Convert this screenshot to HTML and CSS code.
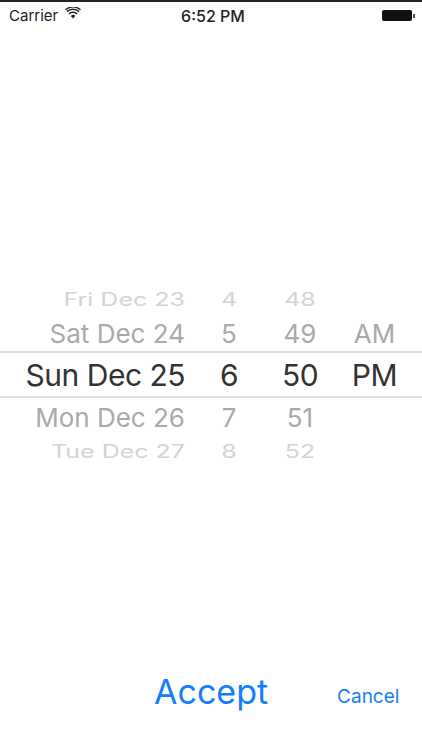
FILE: index.html
```html
<!DOCTYPE html>
<html>
<head>
    <title>Date picker</title>
    <link rel="stylesheet" href="styles.css">
</head>
<body>
    <div class="status-bar">
        <div class="status-left">
            <span>Carrier</span>
            <svg class="wifi" viewBox="0 0 16 12" width="16" height="12">
                <path d="M8 11.4 5.7 8.9a3.3 3.3 0 0 1 4.6 0z" fill="#222"/>
                <path d="M3.9 6.9a6 6 0 0 1 8.2 0" fill="none" stroke="#222" stroke-width="1.6"/>
                <path d="M1.9 4.7a9 9 0 0 1 12.2 0" fill="none" stroke="#222" stroke-width="1.6"/>
                <path d="M0.5 2.7a11.2 11.2 0 0 1 15 0" fill="none" stroke="#222" stroke-width="1.2"/>
            </svg>
        </div>
        <div class="status-time">6:52 PM</div>
        <div class="status-right">
            <div class="battery"></div>
            <div class="battery-tip"></div>
        </div>
    </div>

    <div class="picker">
        <div class="row far">
            <div class="date">Fri Dec 23</div><div>4</div><div>48</div><div></div>
        </div>
        <div class="row near">
            <div class="date">Sat Dec 24</div><div>5</div><div>49</div><div>AM</div>
        </div>
        <div class="row selected">
            <div class="date">Sun Dec 25</div><div>6</div><div>50</div><div>PM</div>
        </div>
        <div class="row near">
            <div class="date">Mon Dec 26</div><div>7</div><div>51</div><div></div>
        </div>
        <div class="row far">
            <div class="date">Tue Dec 27</div><div>8</div><div>52</div><div></div>
        </div>
    </div>

    <div class="actions">
        <a href="#" class="accept">Accept</a>
        <a href="#" class="cancel">Cancel</a>
    </div>
</body>
</html>
```

FILE: styles.css
```css
body {
    margin: 0;
    height: 750px;
    display: flex;
    flex-direction: column;
    background: white;
    font-family: Inter, "Liberation Sans", sans-serif;
    color: #333;
    overflow: hidden;
}

.status-bar {
    height: 27px;
    border-top: 2px solid #222;
    padding: 0 7px 0 9px;
    display: flex;
    align-items: center;
    justify-content: space-between;
    font-size: 15px;
    color: #222;
}

.status-left {
    width: 140px;
    display: flex;
    align-items: center;
    gap: 7px;
}

.wifi {
    margin-bottom: 5px;
}

.status-time {
    font-size: 16px;
    font-weight: 500;
    margin-left: 2px;
}

.status-right {
    width: 140px;
    display: flex;
    justify-content: flex-end;
    align-items: center;
}

.battery {
    width: 30px;
    height: 11px;
    background: #111;
    border-radius: 2px;
}

.battery-tip {
    width: 2px;
    height: 4px;
    margin-left: 1px;
    background: #555;
}

.picker {
    margin-top: 254px;
}

.row {
    display: grid;
    grid-template-columns: 185px 88px 54px 95px;
    align-items: center;
    text-align: center;
    box-sizing: border-box;
}

.date {
    text-align: right;
}

.far {
    height: 31px;
    padding-top: 2px;
    font-size: 25px;
    line-height: 29px;
    color: #d4d4d4;
}

.far > div {
    transform: scaleY(0.72);
}

.near {
    height: 37px;
    padding-top: 2px;
    font-size: 26px;
    color: #aaa;
}

.selected {
    height: 47px;
    font-size: 30px;
    letter-spacing: -0.5px;
    color: #333;
    border-top: 2px solid #ddd;
    border-bottom: 2px solid #ddd;
}

.actions {
    margin-top: 205px;
    display: flex;
    align-items: center;
    padding-left: 154px;
}

.actions a {
    color: #147efb;
    text-decoration: none;
}

.accept {
    font-size: 34px;
}

.cancel {
    font-size: 19px;
    margin-left: 69px;
    margin-top: 9px;
}
```
